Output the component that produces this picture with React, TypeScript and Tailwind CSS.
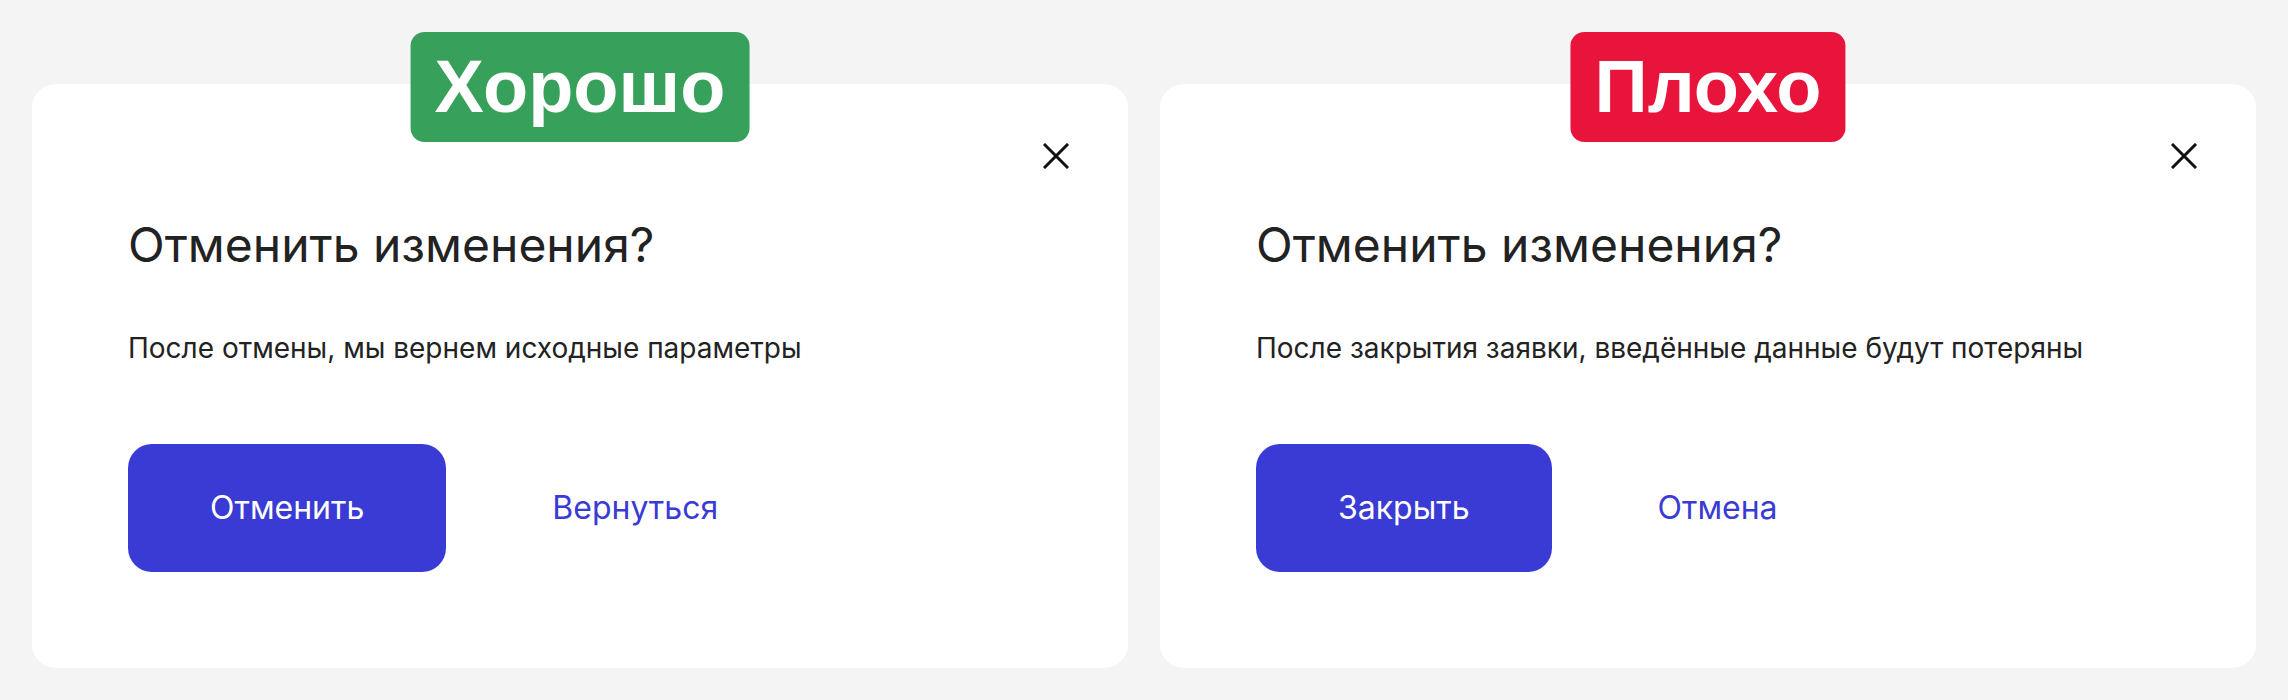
import React from "react";

type DialogProps = {
  label: string;
  labelClass: string;
  text: string;
  primary: string;
  secondary: string;
};

function CloseIcon() {
  return (
    <svg width="26" height="26" viewBox="0 0 26 26" fill="none">
      <path d="M2 2L24 24M24 2L2 24" stroke="#111" strokeWidth="3" strokeLinecap="square" />
    </svg>
  );
}

function Dialog({ label, labelClass, text, primary, secondary }: DialogProps) {
  return (
    <div className="relative flex flex-1 flex-col rounded-3xl bg-white px-24 pb-24 pt-[133px]">
      <div
        className={`absolute left-1/2 top-[-52px] flex h-[110px] -translate-x-1/2 items-center rounded-[14px] px-[24px] font-['Liberation_Sans',Arial,sans-serif] text-[74px] font-bold leading-none text-white ${labelClass}`}
      >
        {label}
      </div>
      <button className="absolute right-[59px] top-[59px]">
        <CloseIcon />
      </button>
      <div className="font-['Inter',sans-serif]">
        <h2 className="text-[48px] font-normal leading-[56px] text-[#222222]">Отменить изменения?</h2>
        <p className="mt-[57px] text-[28px] leading-[36px] text-[#222222]">{text}</p>
        <div className="mt-[78px] flex gap-6">
          <button className="h-[128px] rounded-3xl bg-[#3a3bd4] px-[82px] text-[32px] text-white">{primary}</button>
          <button className="h-[128px] px-[82px] text-[32px] text-[#3a3bd4]">{secondary}</button>
        </div>
      </div>
    </div>
  );
}

export default function App() {
  return (
    <div className="flex h-[700px] w-[2288px] gap-8 bg-[#f4f4f4] px-8 pb-8 pt-[84px]">
      <Dialog
        label="Хорошо"
        labelClass="bg-[#37a05a]"
        text="После отмены, мы вернем исходные параметры"
        primary="Отменить"
        secondary="Вернуться"
      />
      <Dialog
        label="Плохо"
        labelClass="bg-[#e8143c]"
        text="После закрытия заявки, введённые данные будут потеряны"
        primary="Закрыть"
        secondary="Отмена"
      />
    </div>
  );
}
